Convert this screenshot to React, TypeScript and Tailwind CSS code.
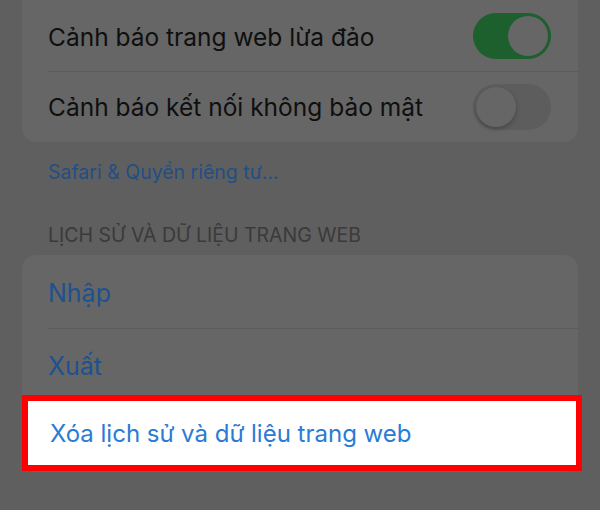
import React from "react";

const Toggle = ({ on }: { on: boolean }) =>
  on ? (
    <div className="w-[78px] h-[46px] rounded-full bg-[#1d5f2d] p-[3px] flex justify-end">
      <div className="w-[40px] h-[40px] rounded-full bg-[#666666]" />
    </div>
  ) : (
    <div className="w-[78px] h-[46px] rounded-full bg-[#5d5d5d] p-[3px] flex justify-start">
      <div className="w-[40px] h-[40px] rounded-full bg-[#666666] shadow-[0_2px_4px_rgba(0,0,0,0.25)]" />
    </div>
  );

const App = () => {
  return (
    <div
      className="relative w-[600px] h-[510px] overflow-hidden bg-[#5f5f5f]"
      style={{ fontFamily: "Inter, 'Noto Sans', sans-serif" }}
    >
      {/* Security card */}
      <div className="mx-[22px] w-[556px] bg-[#666666] rounded-b-[14px]">
        <div className="h-[71px] pt-[3px] pl-[26px] pr-[27px] flex items-center justify-between">
          <span className="text-[24.5px] text-[#0f0f0f]">Cảnh báo trang web lừa đảo</span>
          <div className="-mt-[3px]">
            <Toggle on />
          </div>
        </div>
        <div className="ml-[26px] h-px bg-[#5c5c5c]" />
        <div className="h-[70px] pl-[26px] pr-[27px] flex items-center justify-between">
          <span className="text-[24.5px] text-[#0f0f0f]">Cảnh báo kết nối không bảo mật</span>
          <Toggle on={false} />
        </div>
      </div>

      <div className="pl-[48px] mt-[18px] h-[26px] flex items-center text-[19.5px] text-[#1f4f85]">
        Safari &amp; Quyền riêng tư...
      </div>

      <div className="pl-[48px] mt-[37px] h-[26px] flex items-center text-[19.5px] text-[#3a3a3a]">
        LỊCH SỬ VÀ DỮ LIỆU TRANG WEB
      </div>

      {/* History card */}
      <div className="mx-[22px] mt-[6px] w-[556px] bg-[#666666] rounded-[14px] overflow-hidden">
        <div className="h-[73px] pt-[4px] pl-[26px] flex items-center text-[25px] text-[#1d5190]">Nhập</div>
        <div className="ml-[26px] h-px bg-[#5c5c5c]" />
        <div className="h-[71px] pt-[4px] pl-[26px] flex items-center text-[25px] text-[#1d5190]">Xuất</div>
        <div className="ml-[26px] h-px bg-[#5c5c5c]" />
        <div className="h-[71px]" />
      </div>

      {/* Highlight */}
      <div className="absolute left-[22px] top-[395px] w-[560px] h-[76px] border-[6px] border-[#ff0000] bg-white flex items-center pl-[22px] pt-[2px]">
        <span className="text-[24px] text-[#2a7bd5]">Xóa lịch sử và dữ liệu trang web</span>
      </div>
    </div>
  );
};

export default App;
